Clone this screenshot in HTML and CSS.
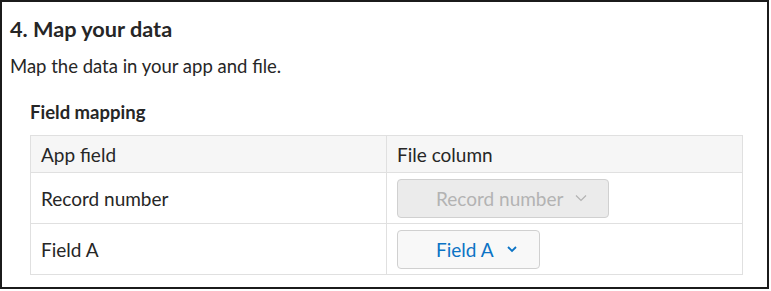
FILE: index.html
```html
<!DOCTYPE html>
<html lang="en">
<head>
    <meta charset="UTF-8">
    <title>Map your data</title>
    <link rel="stylesheet" href="styles.css">
</head>
<body>
    <div class="panel">
        <h2 class="step-title">4. Map your data</h2>
        <p class="step-text">Map the data in your app and file.</p>
        <div class="mapping">
            <h3 class="mapping-title">Field mapping</h3>
            <table class="mapping-table">
                <tr>
                    <th class="col-app">App field</th>
                    <th>File column</th>
                </tr>
                <tr>
                    <td>Record number</td>
                    <td>
                        <button class="picker" disabled>
                            <span>Record number</span>
                            <svg class="chev" width="12" height="8" viewBox="0 0 12 8"><path d="M1 1.5l5 5 5-5" fill="none" stroke="currentColor" stroke-width="1.2"/></svg>
                        </button>
                    </td>
                </tr>
                <tr>
                    <td>Field A</td>
                    <td>
                        <button class="picker">
                            <span>Field A</span>
                            <svg class="chev" width="12" height="8" viewBox="0 0 12 8"><path d="M2 2l4 4 4-4" fill="none" stroke="currentColor" stroke-width="1.8"/></svg>
                        </button>
                    </td>
                </tr>
            </table>
        </div>
    </div>
</body>
</html>
```

FILE: styles.css
```css
body {
    margin: 0;
    font-family: 'Lato', sans-serif;
    color: #262626;
    background: #fff;
}
.panel {
    width: 769px;
    height: 289px;
    box-sizing: border-box;
    border: 2px solid #1b1b1b;
    padding: 14px 8px 0 8px;
}
.step-title {
    margin: 0;
    font-size: 21.7px;
    line-height: 26px;
    font-weight: bold;
}
.step-text {
    margin: 12px 0 0 0;
    font-size: 18.5px;
    line-height: 24px;
}
.mapping {
    padding: 0 20px;
}
.mapping-title {
    margin: 22px 0 0 0;
    font-size: 18.5px;
    line-height: 24px;
    font-weight: bold;
}
.mapping-table {
    margin-top: 11px;
    width: 713px;
    border-collapse: collapse;
    font-size: 19px;
}
.mapping-table th,
.mapping-table td {
    border: 1px solid #e0e0e0;
    padding: 0 10px;
    text-align: left;
    font-weight: normal;
}
.mapping-table th {
    background: #f6f6f6;
    height: 36px;
}
.mapping-table td {
    height: 50px;
}
.col-app {
    width: 335px;
}
.picker {
    display: flex;
    align-items: center;
    gap: 12px;
    height: 39px;
    padding: 0 21px 0 38px;
    border: 1px solid #d0d0d0;
    border-radius: 4px;
    background: #f8f8f8;
    color: #0b73c5;
    font-family: inherit;
    font-size: 19px;
}
.picker:disabled {
    background: #ebebeb;
    color: #b3b3b3;
}
.chev {
    display: block;
}
```
